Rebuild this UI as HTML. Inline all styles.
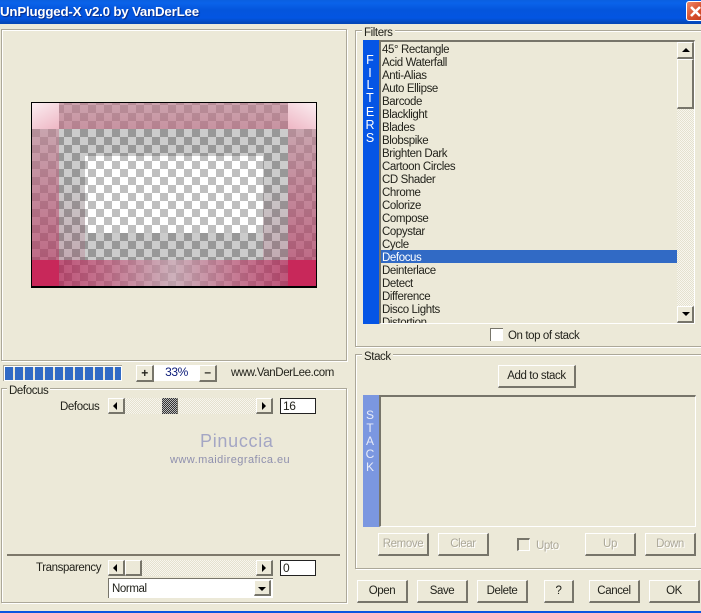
<!DOCTYPE html>
<html><head><meta charset="utf-8">
<style>
html,body{margin:0;padding:0;background:#ECE9D8}
#r{position:relative;width:701px;height:613px;overflow:hidden;background:#ECE9D8;font-family:"Liberation Sans",sans-serif;font-size:11.5px;letter-spacing:-.4px;color:#23231c}
#r div,#r span.a{position:absolute;box-sizing:border-box}
.t{white-space:nowrap;line-height:13px}
.g{border:1px solid #ACA899;box-shadow:inset 1px 1px 0 #fff,1px 1px 0 #fff}
.lb{background:#ECE9D8;padding:0 2px;line-height:13px;white-space:nowrap}
.b{background:#ECE9D8;border-top:1px solid #fff;border-left:1px solid #fff;border-right:2px solid #77756A;border-bottom:2px solid #77756A;text-align:center;line-height:21px;white-space:nowrap}
.d{color:#ACA899;text-shadow:1px 1px 0 #fff}
.track{background-color:#f4f2e8;background-image:conic-gradient(#e4e1cf 25%,#f8f6ee 0 50%,#e4e1cf 0 75%,#f8f6ee 0);background-size:2px 2px}
.edit{background:#fff;border:1px solid #222;padding-left:2px;line-height:14px}
.ck{background:conic-gradient(#bfbfbf 25%,#fff 0 50%,#bfbfbf 0 75%,#fff 0);background-size:16px 16px}
.tri{width:0;height:0}
.lt{color:#fff;width:14px;text-align:center;font-size:12.5px;line-height:13px;letter-spacing:0}
#l .t{margin-top:2px}
</style></head>
<body><div id="r">
<!-- title -->
<div style="left:0;top:0;width:701px;height:24px;background:linear-gradient(#0a5fe0 0,#0a63ea 3px,#0455dc 10px,#0355e2 18px,#0346b8 23px)"></div>
<div class="t" style="left:0;top:4px;color:#fff;font-weight:bold;font-size:13.3px;letter-spacing:-.2px;line-height:16px;text-shadow:1px 1px 1px #0a2a80">UnPlugged-X v2.0 by VanDerLee</div>
<div style="left:686px;top:1px;width:18px;height:20px;background:linear-gradient(135deg,#ee8a6c,#d8502c 55%,#c23c1c);border:1px solid #fff;border-radius:3px"></div>
<svg style="position:absolute;left:686px;top:1px" width="15" height="20"><path d="M5 6 L14 15 M14 6 L5 15" stroke="#fff" stroke-width="2.6"/></svg>
<div style="left:0;top:611px;width:701px;height:2px;background:#0a55e0"></div>

<!-- preview panel -->
<div class="g" style="left:1px;top:29px;width:346px;height:332px"></div>
<div style="left:31px;top:102px;width:286px;height:186px;background:#000"></div>
<div class="ck" style="left:32px;top:103px;width:284px;height:183px;background-position:8px -6px;overflow:hidden">
 <div style="left:27px;top:26px;width:229px;height:131px;border-style:solid;border-color:rgba(0,0,0,.2);border-width:27px 25px 27px 26px"></div>
 <div style="left:27px;top:26px;width:26px;height:131px;background:linear-gradient(rgba(160,90,110,0) 40%,rgba(160,50,85,.22))"></div>
 <div style="left:231px;top:26px;width:25px;height:131px;background:linear-gradient(rgba(160,90,110,0) 40%,rgba(160,50,85,.22))"></div>
 <div style="left:27px;top:0;width:229px;height:26px;background:linear-gradient(rgba(180,120,135,.68),rgba(178,105,125,.72))"></div>
 <div style="left:0;top:26px;width:27px;height:131px;background:linear-gradient(rgba(175,122,136,.68),rgba(165,51,88,.72))"></div>
 <div style="left:256px;top:26px;width:28px;height:131px;background:linear-gradient(rgba(175,122,136,.68),rgba(165,51,88,.72))"></div>
 <div style="left:27px;top:157px;width:229px;height:26px;background:linear-gradient(90deg,rgba(165,20,70,.72),rgba(175,70,105,.72) 22%,rgba(188,150,164,.75) 50%,rgba(175,70,105,.72) 78%,rgba(165,20,70,.72))"></div>
 <div style="left:0;top:0;width:27px;height:26px;background:linear-gradient(150deg,#fbeef1,#eeb6c4)"></div>
 <div style="left:256px;top:0;width:28px;height:26px;background:linear-gradient(210deg,#fbeef1,#eeb6c4)"></div>
 <div style="left:0;top:157px;width:27px;height:26px;background:#c8285a"></div>
 <div style="left:256px;top:157px;width:28px;height:26px;background:#c8285a"></div>
</div>

<!-- progress -->
<div style="left:3px;top:365px;width:119px;height:16px;background:#fff;border-top:1px solid #ACA899;border-left:1px solid #ACA899"></div>
<div style="left:5px;top:367px;width:116px;height:13px;background:repeating-linear-gradient(90deg,#316AC5 0 8px,#ECE9D8 8px 10px)"></div>

<div class="b" style="left:136px;top:365px;width:18px;height:17px;font-weight:bold;line-height:14px;font-size:12px">+</div>
<div style="left:154px;top:365px;width:45px;height:16px;background:#fff;color:#0a1a78;text-align:center;line-height:15px;font-size:12px">33%</div>
<div class="b" style="left:199px;top:365px;width:18px;height:17px;font-weight:bold;line-height:13px;font-size:12px">–</div>
<div class="t" style="left:231px;top:367px;font-size:11.5px">www.VanDerLee.com</div>

<!-- defocus group -->
<div class="g" style="left:1px;top:388px;width:346px;height:215px"></div>
<div class="lb" style="left:7px;top:385px">Defocus</div>
<div class="t" style="left:60px;top:401px">Defocus</div>

<div class="track" style="left:108px;top:398px;width:165px;height:16px"></div>
<div class="b" style="left:108px;top:398px;width:17px;height:16px"></div>
<div class="tri" style="left:113px;top:402px;border-style:solid;border-width:4px 4px 4px 0;border-color:transparent #000"></div>
<div style="left:162px;top:398px;width:16px;height:16px;background:conic-gradient(#333 25%,#bbb 0 50%,#333 0 75%,#bbb 0);background-size:2px 2px;border-right:1px solid #77756A"></div>
<div class="b" style="left:256px;top:398px;width:17px;height:16px"></div>
<div class="tri" style="left:262px;top:402px;border-style:solid;border-width:4px 0 4px 4px;border-color:transparent #000"></div>
<div class="edit" style="left:280px;top:398px;width:36px;height:16px;font-size:12px">16</div>

<div class="t" style="left:200px;top:431px;font-size:18px;line-height:21px;letter-spacing:.7px;color:#a4a6c4">Pinuccia</div>
<div class="t" style="left:170px;top:454px;font-size:11px;letter-spacing:.45px;color:#8f90ae">www.maidiregrafica.eu</div>

<div style="left:7px;top:554px;width:333px;height:2px;background:#7d786a"></div>
<div class="t" style="left:36px;top:562px">Transparency</div>
<div class="track" style="left:108px;top:560px;width:165px;height:16px"></div>
<div class="b" style="left:108px;top:560px;width:17px;height:16px"></div>
<div class="tri" style="left:113px;top:564px;border-style:solid;border-width:4px 4px 4px 0;border-color:transparent #000"></div>
<div class="b" style="left:125px;top:560px;width:17px;height:16px"></div>
<div class="b" style="left:256px;top:560px;width:17px;height:16px"></div>
<div class="tri" style="left:262px;top:564px;border-style:solid;border-width:4px 0 4px 4px;border-color:transparent #000"></div>
<div class="edit" style="left:280px;top:560px;width:36px;height:16px;font-size:12px">0</div>

<div style="left:108px;top:578px;width:165px;height:20px;background:#fff;border-top:1px solid #77756A;border-left:1px solid #77756A;padding-left:3px;line-height:20px">Normal</div>
<div class="b" style="left:254px;top:580px;width:17px;height:16px"></div>
<div class="tri" style="left:258px;top:587px;border-style:solid;border-width:4px 4px 0 4px;border-color:#000 transparent"></div>

<!-- filters -->
<div class="g" style="left:355px;top:30px;width:350px;height:317px"></div>
<div class="lb" style="left:362px;top:27px">Filters</div>
<div style="left:363px;top:40px;width:16px;height:284px;background:#0555E5"></div>
<div class="lt" style="left:363px;top:54px">F</div>
<div class="lt" style="left:363px;top:67px">I</div>
<div class="lt" style="left:363px;top:79px">L</div>
<div class="lt" style="left:363px;top:92px">T</div>
<div class="lt" style="left:363px;top:106px">E</div>
<div class="lt" style="left:363px;top:119px">R</div>
<div class="lt" style="left:363px;top:132px">S</div>

<div id="l" style="left:379px;top:40px;width:316px;height:284px;border-top:2px solid #77756A;border-left:2px solid #77756A;border-bottom:1px solid #fff;border-right:1px solid #fff;overflow:hidden">
<div style="left:0;top:208px;width:296px;height:13px;background:#316AC5"></div>
<div class="t" style="left:1px;top:0">45° Rectangle</div>
<div class="t" style="left:1px;top:13px">Acid Waterfall</div>
<div class="t" style="left:1px;top:26px">Anti-Alias</div>
<div class="t" style="left:1px;top:39px">Auto Ellipse</div>
<div class="t" style="left:1px;top:52px">Barcode</div>
<div class="t" style="left:1px;top:65px">Blacklight</div>
<div class="t" style="left:1px;top:78px">Blades</div>
<div class="t" style="left:1px;top:91px">Blobspike</div>
<div class="t" style="left:1px;top:104px">Brighten Dark</div>
<div class="t" style="left:1px;top:117px">Cartoon Circles</div>
<div class="t" style="left:1px;top:130px">CD Shader</div>
<div class="t" style="left:1px;top:143px">Chrome</div>
<div class="t" style="left:1px;top:156px">Colorize</div>
<div class="t" style="left:1px;top:169px">Compose</div>
<div class="t" style="left:1px;top:182px">Copystar</div>
<div class="t" style="left:1px;top:195px">Cycle</div>
<div class="t" style="left:1px;top:208px;color:#fff">Defocus</div>
<div class="t" style="left:1px;top:221px">Deinterlace</div>
<div class="t" style="left:1px;top:234px">Detect</div>
<div class="t" style="left:1px;top:247px">Difference</div>
<div class="t" style="left:1px;top:260px">Disco Lights</div>
<div class="t" style="left:1px;top:273px">Distortion</div>
<div class="track" style="left:296px;top:0;width:18px;height:282px"></div>
<div class="b" style="left:296px;top:0;width:17px;height:17px"></div>
<div class="b" style="left:296px;top:17px;width:17px;height:50px"></div>
<div class="b" style="left:296px;top:264px;width:17px;height:17px"></div>
</div>
<div class="tri" style="left:682px;top:48px;border-style:solid;border-width:0 4px 4px 4px;border-color:#000 transparent"></div>
<div class="tri" style="left:682px;top:312px;border-style:solid;border-width:4px 4px 0 4px;border-color:#000 transparent"></div>

<div style="left:490px;top:328px;width:13px;height:13px;background:#fff;border-top:1px solid #77756A;border-left:1px solid #77756A"></div>
<div class="t" style="left:508px;top:330px">On top of stack</div>

<!-- stack -->
<div class="g" style="left:355px;top:354px;width:350px;height:215px"></div>
<div class="lb" style="left:362px;top:351px">Stack</div>
<div class="b" style="left:498px;top:365px;width:78px;height:23px">Add to stack</div>
<div style="left:363px;top:395px;width:16px;height:132px;background:#7B97E0"></div>
<div class="lt" style="left:363px;top:409px;font-size:12px;color:#e8ecf8">S</div>
<div class="lt" style="left:363px;top:422px;font-size:12px;color:#e8ecf8">T</div>
<div class="lt" style="left:363px;top:435px;font-size:12px;color:#e8ecf8">A</div>
<div class="lt" style="left:363px;top:448px;font-size:12px;color:#e8ecf8">C</div>
<div class="lt" style="left:363px;top:461px;font-size:12px;color:#e8ecf8">K</div>
<div style="left:379px;top:395px;width:317px;height:132px;border-top:2px solid #77756A;border-left:2px solid #77756A;border-bottom:1px solid #fff;border-right:1px solid #fff"></div>

<div class="b d" style="left:378px;top:533px;width:51px;height:23px">Remove</div>
<div class="b d" style="left:438px;top:533px;width:51px;height:23px">Clear</div>
<div style="left:517px;top:538px;width:13px;height:13px;border-top:2px solid #77756A;border-left:2px solid #77756A;border-right:1px solid #fff;border-bottom:1px solid #fff"></div>
<div class="t d" style="left:536px;top:540px">Upto</div>
<div class="b d" style="left:585px;top:533px;width:51px;height:23px">Up</div>
<div class="b d" style="left:645px;top:533px;width:51px;height:23px">Down</div>

<div class="b" style="left:357px;top:580px;width:51px;height:23px">Open</div>
<div class="b" style="left:417px;top:580px;width:51px;height:23px">Save</div>
<div class="b" style="left:477px;top:580px;width:51px;height:23px">Delete</div>
<div class="b" style="left:544px;top:580px;width:30px;height:23px">?</div>
<div class="b" style="left:589px;top:580px;width:51px;height:23px">Cancel</div>
<div class="b" style="left:649px;top:580px;width:51px;height:23px">OK</div>
</div></body></html>
